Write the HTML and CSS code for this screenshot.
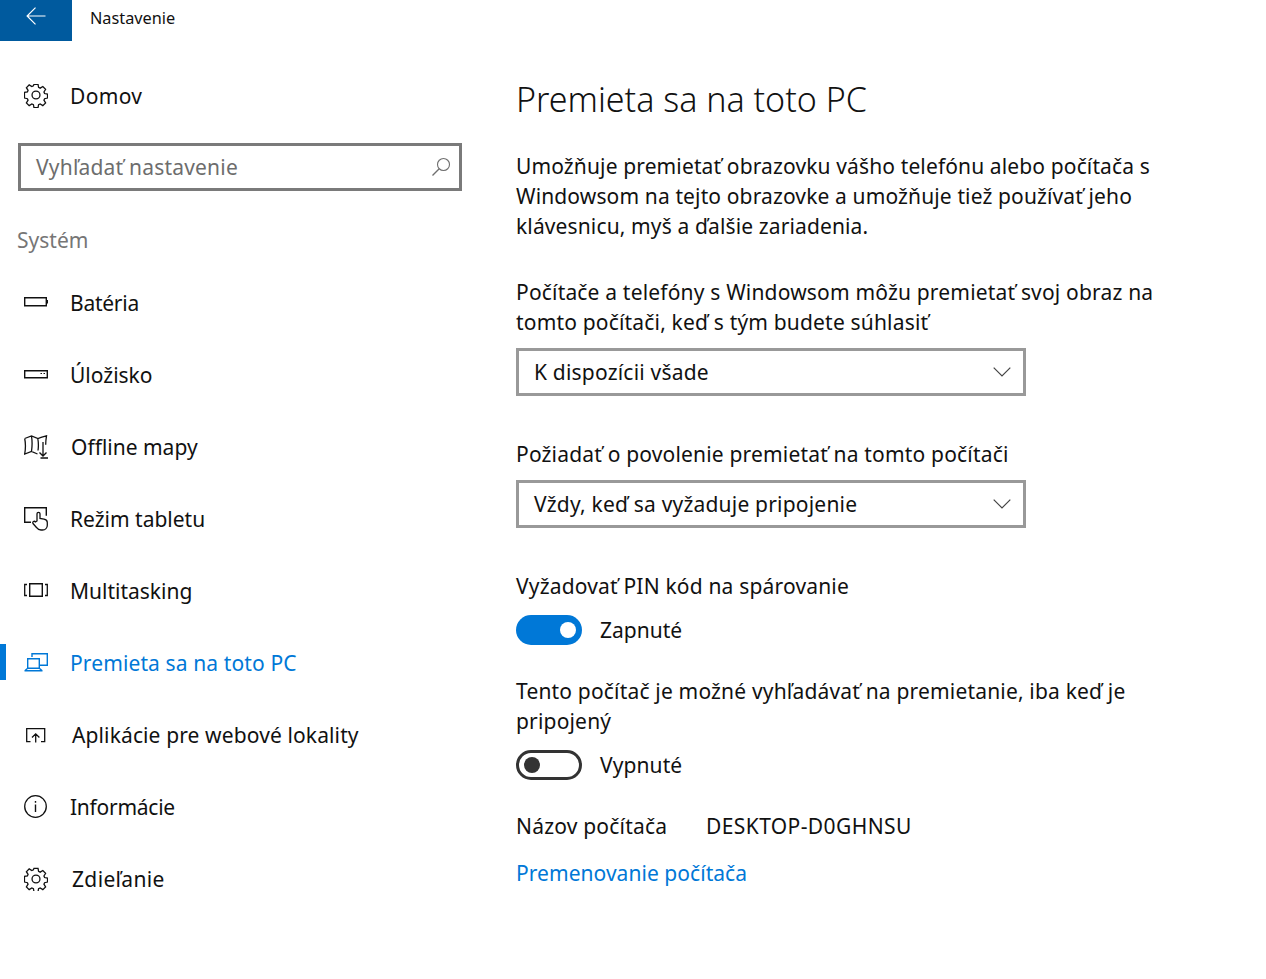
FILE: index.html
```html
<!DOCTYPE html>
<html lang="sk">
<head>
<meta charset="utf-8">
<title>Nastavenie</title>
<link rel="stylesheet" href="styles.css">
</head>
<body>
<header class="topbar">
  <div class="back">
    <svg class="back-icon" width="20" height="18" viewBox="0 0 20 18"><path d="M9.500.6 1.100 9l8.400 8.400M1.100 9H19.500" fill="none" stroke="#fff" stroke-width="1.200"/></svg>
  </div>
  <div class="app-title">Nastavenie</div>
</header>
<div class="page">
  <aside class="side">
    <div class="row home">
      <svg class="icon" viewBox="0 1 24 24"><use href="#gear"/></svg>
      <span class="wide">Domov</span>
    </div>
    <div class="search">
      <span class="search-text">Vyhľadať nastavenie</span>
      <svg width="20" height="20" viewBox="0 0 20 20"><circle cx="12.500" cy="7.500" r="6" fill="none" stroke="#6f6f6f" stroke-width="1.100"/><path d="M8.200 11.800 1.500 18.500" stroke="#6f6f6f" stroke-width="1.300"/></svg>
    </div>
    <div class="section">Systém</div>
    <nav class="nav">
      <div class="row"><svg class="icon" viewBox="0 0 24 24"><path d="M.7 6.700h21.600v8H.7z" fill="none" stroke="#111" stroke-width="1.400"/><path d="M22.500 9h1.500v3.500h-1.500z" fill="#111"/></svg><span class="tight">Batéria</span></div>
      <div class="row"><svg class="icon" viewBox="0 0 24 24"><path d="M.7 7.700h22.600v7H.7z" fill="none" stroke="#111" stroke-width="1.400"/><path d="M16.500 10.500h1.500M19.500 10.500H21" stroke="#111" stroke-width="1.200"/></svg><span>Úložisko</span></div>
      <div class="row"><svg class="icon" viewBox="0 0 24 24"><path d="M.7 3.500 7.500 1 14 3.500 17 2.300M.7 3.500c1 5 1 10 0 15.500l6.800-2.500 6 2.500M7.500 1c.8 5 .8 10 0 15.500M13.800 3.500c.7 4 .8 8 .2 12M17 2.300 22.500 .8c-.5 3-.8 6-.8 9" fill="none" stroke="#111" stroke-width="1.300"/><path d="M19 7v14M15.500 17.500l3.500 3.500 3.500-3.500M16.500 23h7.500" fill="none" stroke="#111" stroke-width="1.300"/></svg><span class="t1">Offline mapy</span></div>
      <div class="row"><svg class="icon" viewBox="0 0 24 24"><path d="M7 15.300H.7V.7h21.600v8" fill="none" stroke="#111" stroke-width="1.400"/><path d="M13 14V6.700c0-1.800 3-1.800 3 0v4.800l4 .6c2.200.4 3.300 1.500 3.300 3.400v2.700c0 2.800-2 4.800-4.800 4.800H17c-2 0-3.300-.8-4.300-2.300L9 16.500c-1-1.700 1.300-3 2.500-1.500z" fill="#fff" stroke="#111" stroke-width="1.300"/></svg><span>Režim tabletu</span></div>
      <div class="row"><svg class="icon" viewBox="0 0 24 24"><path d="M5.700 4.700h12.600v12.600H5.700z" fill="none" stroke="#111" stroke-width="1.400"/><path d="M3 5.500H.7v11H3M21 5.500h2.300v11H21" fill="none" stroke="#111" stroke-width="1.300"/></svg><span>Multitasking</span></div>
      <div class="row active"><svg class="icon" viewBox="0 0 24 24"><path d="M8 6V2.700h15.300v11.600H16M3.700 7.700h11.600v9.600H3.700zM.5 19.700h18M.8 19.700l2.900-2.400M18.200 19.700l-2.900-2.400" fill="none" stroke="#0078d7" stroke-width="1.400"/></svg><span class="mid">Premieta sa na toto PC</span></div>
      <div class="row"><svg class="icon" viewBox="0 0 24 24"><path d="M6.500 18.700H2.700V5.700h18v13H17M11.700 19.500V11M8 14.500l3.700-3.700 3.700 3.700" fill="none" stroke="#111" stroke-width="1.300"/></svg><span class="t2 mid">Aplikácie pre webové lokality</span></div>
      <div class="row"><svg class="icon" viewBox="0 0 24 24"><circle cx="11.500" cy="11.500" r="10.800" fill="none" stroke="#111" stroke-width="1.300"/><path d="M11.500 9.500v7.500M11.500 6v1.700" stroke="#111" stroke-width="1.400"/></svg><span class="tight">Informácie</span></div>
      <div class="row"><svg class="icon" viewBox="0 0 24 24"><use href="#gear"/></svg><span class="t2 wide">Zdieľanie</span></div>
    </nav>
  </aside>
  <main class="main">
    <h1 class="title">Premieta sa na toto PC</h1>
    <p class="para intro">Umožňuje premietať obrazovku vášho telefónu alebo počítača s<br>Windowsom na tejto obrazovke a umožňuje tiež používať jeho<br>klávesnicu, myš a ďalšie zariadenia.</p>
    <p class="para block">Počítače a telefóny s Windowsom môžu premietať svoj obraz na<br>tomto počítači, keď s tým budete súhlasiť</p>
    <div class="select"><span>K dispozícii všade</span><svg width="18" height="10" viewBox="0 0 18 10"><path d="M.7.700 9 9l8.300-8.300" fill="none" stroke="#444" stroke-width="1.200"/></svg></div>
    <p class="para gap-select">Požiadať o povolenie premietať na tomto počítači</p>
    <div class="select"><span>Vždy, keď sa vyžaduje pripojenie</span><svg width="18" height="10" viewBox="0 0 18 10"><path d="M.7.700 9 9l8.300-8.300" fill="none" stroke="#444" stroke-width="1.200"/></svg></div>
    <p class="para gap-select">Vyžadovať PIN kód na spárovanie</p>
    <div class="toggle-row first"><span class="toggle on"><i class="knob"></i></span><span>Zapnuté</span></div>
    <p class="para gap-toggle">Tento počítač je možné vyhľadávať na premietanie, iba keď je<br>pripojený</p>
    <div class="toggle-row second"><span class="toggle off"><i class="knob"></i></span><span class="vyp">Vypnuté</span></div>
    <div class="name"><span class="name-label">Názov počítača</span><span class="name-value">DESKTOP-D0GHNSU</span></div>
    <a class="link" href="#">Premenovanie počítača</a>
  </main>
</div>
<svg class="defs" width="0" height="0"><defs>
  <g id="gear" fill="none" stroke="#111" stroke-width="1.400" transform="scale(.923)">
    <circle cx="13" cy="13" r="4.300"/>
    <path d="M10.800 1.500h4.400l.6 3.300 1.700.8 2.900-1.800 3 3.100-1.800 2.800.7 1.700 3.200.6v4.300l-3.200.7-.7 1.600 1.800 2.900-3 3-2.900-1.800-1.700.7-.6 3.300h-4.400l-.6-3.300-1.700-.7-2.900 1.800-3-3 1.800-2.900-.7-1.600-3.200-.7V10.200l3.200-.6.700-1.700-1.800-2.800 3-3.100 2.900 1.800 1.700-.8z"/>
  </g>
</defs></svg>
</body>
</html>
```
FILE: styles.css
```css
* { box-sizing: border-box; }
html, body { margin: 0; padding: 0; background: #fff; }
body { font-family: "Noto Sans", "Open Sans", sans-serif; font-size: 21px; color: #111; overflow: hidden; height: 979px; }
.topbar { display: flex; height: 41px; }
.back { width: 72px; height: 41px; background: #005a9e; display: flex; align-items: flex-start; padding: 7px 0 0 26px; }
.back-icon { display: block; }
.app-title { margin-left: 18px; font-size: 16.3px; line-height: 36px; }
.page { display: flex; }
.side { width: 516px; flex: none; }
.row { height: 72px; display: flex; align-items: center; padding-left: 24px; position: relative; }
.row .icon { width: 24px; height: 24px; flex: none; margin-right: 22px; }
.row .t1 { margin-left: 1px; }
.row .t2 { margin-left: 2px; }
.wide { letter-spacing: .35px; }
.mid { letter-spacing: .12px; }
.tight { letter-spacing: -.25px; }
.home { margin-top: 19px; }
.search { margin: 11px 0 0 18px; width: 444px; height: 48px; border: 3px solid #7a7a7a; display: flex; align-items: center; justify-content: space-between; padding: 0 8px 0 15px; color: #6d6d6d; }
.search-text { letter-spacing: .2px; }
.section { margin: 34px 0 0 17px; line-height: 30px; color: #767676; }
.nav { margin-top: 12px; }
.active { color: #0078d7; }
.active::before { content: ""; position: absolute; left: 0; top: 17px; width: 6px; height: 36px; background: #0078d7; }
.main { width: 700px; flex: none; }
.title { margin: 32px 0 0; font-size: 34px; font-weight: 300; line-height: 52px; }
.para { margin: 0; line-height: 30px; letter-spacing: .18px; }
.intro { margin-top: 26px; letter-spacing: .13px; }
.block { margin-top: 36px; }
.select { margin-top: 11px; width: 510px; height: 48px; border: 3px solid #999; display: flex; align-items: center; justify-content: space-between; padding: 0 12px 0 15px; letter-spacing: .2px; }
.gap-select { margin-top: 43px; }
.toggle-row { display: flex; align-items: center; gap: 18px; height: 30px; }
.first { margin-top: 14px; }
.second { margin-top: 14px; }
.gap-toggle { margin-top: 31px; }
.toggle { width: 66px; height: 30px; border-radius: 15px; display: flex; align-items: center; padding: 0 6px; }
.knob { width: 16px; height: 16px; border-radius: 50%; display: block; }
.on { background: #0078d7; justify-content: flex-end; }
.on .knob { background: #fff; }
.off { border: 3px solid #333; padding: 0 5px; }
.off .knob { background: #333; }
.vyp { letter-spacing: .1px; }
.name { margin-top: 31px; line-height: 30px; display: flex; }
.name-label { width: 190px; letter-spacing: .2px; }
.name-value { letter-spacing: .4px; }
.link { display: block; margin-top: 17px; line-height: 30px; color: #0078d7; text-decoration: none; letter-spacing: .05px; }
.defs { position: absolute; }
```
